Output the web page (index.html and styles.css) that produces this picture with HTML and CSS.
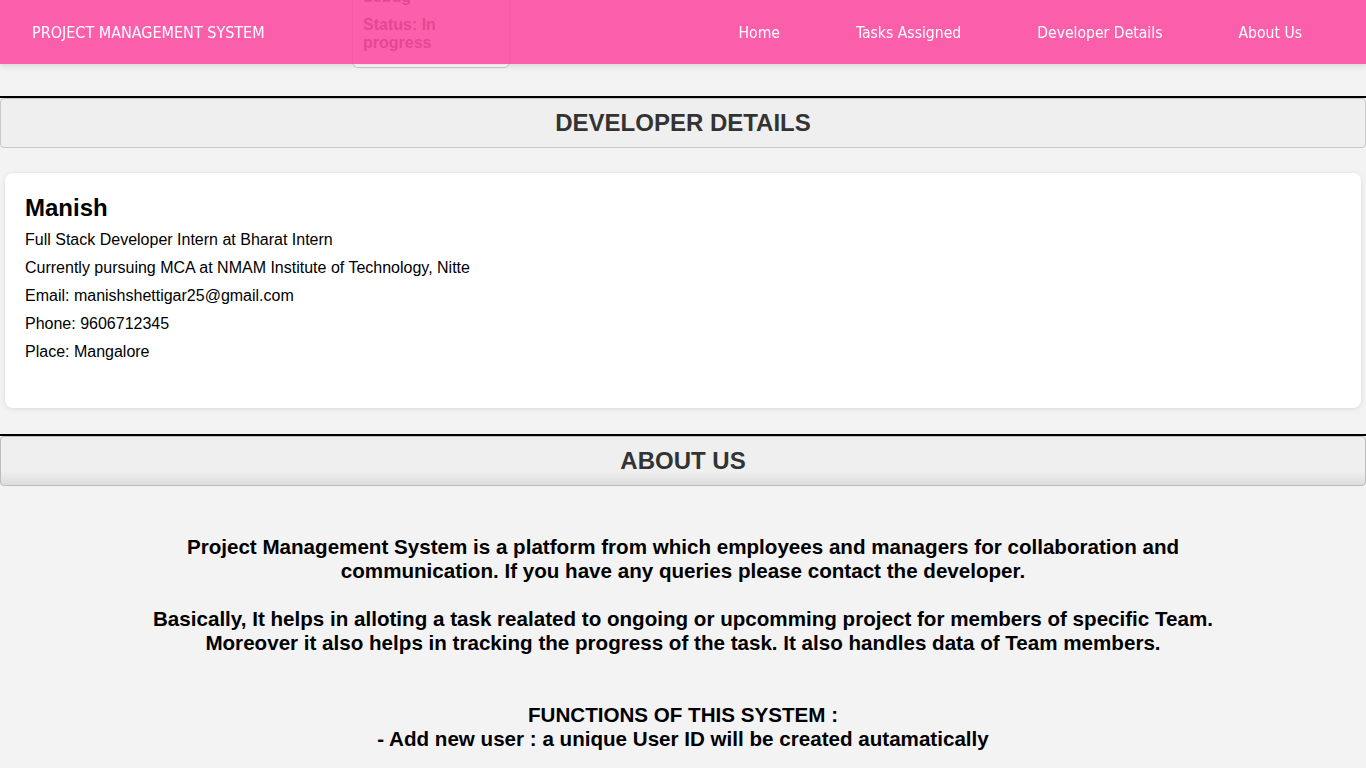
FILE: index.html
```html
<!DOCTYPE html>
<html lang="en">
<head>
<meta charset="utf-8">
<title>Project Management System</title>
<link rel="stylesheet" href="styles.css">
</head>
<body>
<div class="peek">
  <p class="peek-line">debug</p>
  <p class="peek-line">Status: In progress</p>
</div>
<nav class="navbar">
  <div class="brand">PROJECT MANAGEMENT SYSTEM</div>
  <ul class="nav-links">
    <li><a href="#">Home</a></li>
    <li><a href="#">Tasks Assigned</a></li>
    <li><a href="#">Developer Details</a></li>
    <li><a href="#">About Us</a></li>
  </ul>
</nav>
<main class="page">
  <section class="section">
    <h2 class="section-title">DEVELOPER DETAILS</h2>
    <div class="dev-card">
      <h3 class="dev-name">Manish</h3>
      <p class="dev-line">Full Stack Developer Intern at Bharat Intern</p>
      <p class="dev-line">Currently pursuing MCA at NMAM Institute of Technology, Nitte</p>
      <p class="dev-line">Email: manishshettigar25@gmail.com</p>
      <p class="dev-line">Phone: 9606712345</p>
      <p class="dev-line">Place: Mangalore</p>
    </div>
  </section>
  <section class="section about">
    <h2 class="section-title shaded">ABOUT US</h2>
    <div class="about-text">
      <p class="about-p">Project Management System is a platform from which employees and managers for collaboration and communication. If you have any queries please contact the developer.</p>
      <p class="about-p wide-gap">Basically, It helps in alloting a task realated to ongoing or upcomming project for members of specific Team. Moreover it also helps in tracking the progress of the task. It also handles data of Team members.</p>
      <p class="about-p">FUNCTIONS OF THIS SYSTEM :<br>- Add new user : a unique User ID will be created autamatically</p>
    </div>
  </section>
</main>
</body>
</html>
```

FILE: styles.css
```css
html, body {
  margin: 0;
  padding: 0;
}
body {
  background: #f3f3f3;
  font-family: "Liberation Sans", Arial, sans-serif;
  color: #000;
  position: relative;
  min-height: 768px;
}

.navbar {
  position: fixed;
  top: 0;
  left: 0;
  right: 0;
  height: 64px;
  box-sizing: border-box;
  background: rgba(252, 74, 161, 0.88);
  box-shadow: 0 2px 6px rgba(0, 0, 0, 0.12);
  display: flex;
  align-items: center;
  justify-content: space-between;
  padding: 1px 64px 0 32px;
  z-index: 10;
  font-family: "DejaVu Sans Condensed", "DejaVu Sans", sans-serif;
  font-stretch: condensed;
  color: #fff;
}
.brand {
  font-size: 16px;
}
.nav-links {
  list-style: none;
  display: flex;
  gap: 76px;
  margin: 0;
  padding: 0;
  font-size: 15.6px;
}
.nav-links a {
  color: #fff;
  text-decoration: none;
}

.peek {
  position: absolute;
  left: 352px;
  top: -40px;
  width: 136px;
  padding: 27px 10px 15px 10px;
  background: #fff;
  border: 1px solid #c9c9c9;
  border-radius: 6px;
  z-index: 1;
}
.peek-line {
  margin: 0;
  font-size: 16px;
  font-weight: bold;
  line-height: 18px;
  color: #333;
}
.peek-line + .peek-line {
  margin-top: 10px;
}

.page {
  padding-top: 96px;
}

.section-title {
  margin: 0;
  border-top: 2px solid #000;
  height: 52px;
  box-sizing: border-box;
  position: relative;
  isolation: isolate;
  display: flex;
  align-items: center;
  justify-content: center;
  font-size: 24px;
  font-weight: bold;
  color: #333;
  background: #f3f3f3;
}
.section-title::before {
  content: "";
  position: absolute;
  left: 0;
  right: 0;
  top: 0;
  bottom: 0;
  border: 1px solid #c8c8c8;
  border-radius: 4px;
  background: #efefef;
  z-index: -1;
}
.section-title.shaded::before {
  background: linear-gradient(to bottom, #efefef 0%, #efefef 72%, #dcdcdc 100%);
  border-color: #bdbdbd;
}

.dev-card {
  margin: 25px 5px 26px 5px;
  background: #fff;
  border-radius: 8px;
  box-shadow: 0 1px 5px rgba(0, 0, 0, 0.1);
  padding: 21px 20px 42px 20px;
}
.dev-name {
  margin: 0 0 4px 0;
  font-size: 24px;
  line-height: 28px;
  font-weight: bold;
}
.dev-line {
  margin: 0;
  font-size: 16px;
  line-height: 28px;
}

.about-text {
  width: 80%;
  margin: 49px auto 0 auto;
  text-align: center;
}
.about-p {
  margin: 0 0 24px 0;
  font-size: 20.6px;
  font-weight: bold;
  line-height: 24px;
}
.about-p.wide-gap {
  margin-bottom: 48px;
}
```
